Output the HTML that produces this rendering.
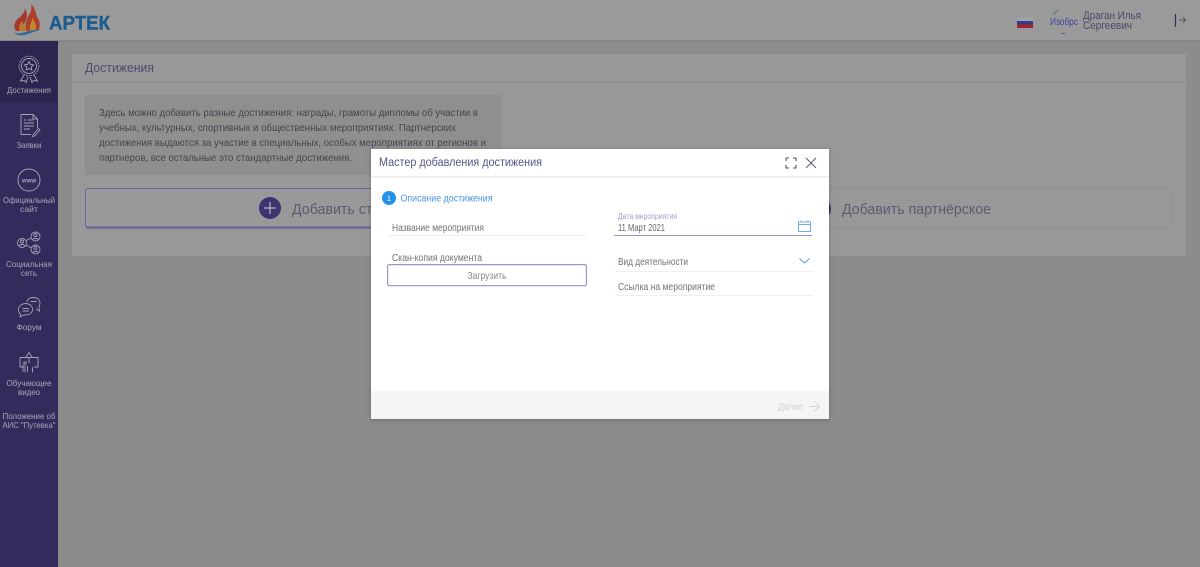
<!DOCTYPE html>
<html lang="ru">
<head>
<meta charset="utf-8">
<title>Достижения</title>
<style>
html,body{margin:0;padding:0;width:1200px;height:567px;overflow:hidden;background:#8c8c8c}
svg{display:block;font-family:"Liberation Sans","DejaVu Sans",sans-serif;filter:blur(.3px)}
.s{font-size:8.5px;fill:#a9a7b6;text-anchor:middle}
.ic{fill:none;stroke:#a6a4b4;stroke-width:.9}
.f{font-size:10px;fill:#727272}
.i{font-size:10.5px;fill:#44444c}
</style>
</head>
<body>
<svg width="1200" height="567" viewBox="0 0 1200 567" xmlns="http://www.w3.org/2000/svg">
<defs>
<filter id="sh" x="-5%" y="-5%" width="110%" height="110%"><feDropShadow dx="0" dy="1" stdDeviation="2" flood-color="#000" flood-opacity=".25"/></filter>
</defs>
<rect width="1200" height="567" fill="#8c8c8c"/>

<!-- top bar -->
<rect width="1200" height="41" fill="#9a9a9a"/>
<rect y="40" width="1200" height="2" fill="#868686"/>
<!-- logo -->
<path d="M16 31C12 25 16 20 20 17C23 14 25 12 25 8C27 12 28 17 25 22C23 26 24 29 26 31Z" fill="#a33a2c"/>
<path d="M27 31C24 26 26 20 29 15C31 12 32 8 31 4C35 8 36 13 37 17C40 21 41 26 38 31Z" fill="#ad4029"/>
<path d="M20 31C18 27 20 24 22 21C23 25 26 26 27 31Z" fill="#bd7a2c"/>
<path d="M30 31C29 26 31 23 33 18C34 22 37 25 36 31Z" fill="#c4862f"/>
<path d="M14 32.500C21 35.500 27 29.500 41 29.500C33 31.500 26 36.500 18 35C16 34.600 15 33.600 14 32.500Z" fill="#2f6c9c"/>
<text x="49" y="29.500" font-size="19" font-weight="700" fill="#1d5c8f" stroke="#1d5c8f" stroke-width=".4" textLength="61" lengthAdjust="spacingAndGlyphs">АРТЕК</text>

<!-- top right -->
<rect x="1017" y="17" width="16" height="4" fill="#a2a2a6"/>
<rect x="1017" y="21" width="16" height="4" fill="#2b3e90"/>
<rect x="1017" y="24.500" width="16" height="3.500" fill="#a8242c"/>
<path d="M1052 14L1057 9L1059 11L1054 15Z" fill="#6f8f78"/>
<text x="1050" y="25" font-size="10" fill="#3e45a0" textLength="28" lengthAdjust="spacingAndGlyphs">Изобрс</text>
<rect x="1061" y="33" width="4" height="1" fill="#5a5a90"/>
<text x="1083" y="19" font-size="11" fill="#4a4a6c" textLength="58" lengthAdjust="spacingAndGlyphs">Драган Илья</text>
<text x="1083" y="29" font-size="11" fill="#4a4a6c" textLength="49" lengthAdjust="spacingAndGlyphs">Сергеевич</text>
<path d="M1175.500 14V27" stroke="#34305c" stroke-width="1.200" fill="none"/>
<path d="M1179 20H1185.500M1183 17.500L1185.500 20L1183 22.500" stroke="#55556a" stroke-width="1" fill="none"/>

<!-- sidebar -->
<rect y="41" width="58" height="526" fill="#342a5c"/>
<rect y="41" width="58" height="62" fill="#2e2450"/>
<!-- medal -->
<g class="ic">
<circle cx="29" cy="66" r="9.800" stroke-dasharray="1.600 .8"/><circle cx="29" cy="66" r="7.500"/>
<path d="M29 61.500L30.400 64.500L33.500 64.900L31.200 67L31.800 70L29 68.500L26.200 70L26.800 67L24.500 64.900L27.600 64.500Z"/>
<path d="M24 75L20.500 81L24.500 80.500L26 82.500L28 77M34 75L37.500 81L33.500 80.500L32 82.500L30 77"/>
</g>
<text class="s" x="29" y="93" textLength="44" lengthAdjust="spacingAndGlyphs">Достижения</text>
<!-- doc -->
<g class="ic">
<path d="M21 114.500H33L37.500 119V128M33 114.500V119H37.500M21 114.500V134.500H31"/>
<path d="M24 120H26M27.500 120H33M24 123H34M24 126H34M24 129H30"/>
<path d="M33 135L38.500 128.500L40 130L34.500 136L32.500 136.500Z"/>
</g>
<text class="s" x="29" y="148" textLength="25" lengthAdjust="spacingAndGlyphs">Заявки</text>
<!-- www -->
<circle class="ic" cx="29" cy="180" r="11"/>
<text x="29" y="182.500" font-size="6.500" font-weight="700" fill="#a6a4b4" text-anchor="middle" textLength="14" lengthAdjust="spacingAndGlyphs">www</text>
<text class="s" x="29" y="203" textLength="52" lengthAdjust="spacingAndGlyphs">Официальный</text>
<text class="s" x="29" y="212" textLength="18" lengthAdjust="spacingAndGlyphs">сайт</text>
<!-- social -->
<g class="ic">
<circle cx="22" cy="243" r="4.500"/><circle cx="35.500" cy="236.500" r="4.500"/><circle cx="35.500" cy="249.500" r="4.500"/>
<path d="M26 240.500L31.500 238M26 245L31.500 248"/>
<circle cx="22" cy="241.500" r="1.500"/><circle cx="35.500" cy="235" r="1.500"/><circle cx="35.500" cy="248" r="1.500"/>
<path d="M19.500 246C20 244 24 244 24.500 246M33 239.500C33.500 238 37.500 238 38 239.500M33 252.500C33.500 251 37.500 251 38 252.500"/>
</g>
<text class="s" x="29" y="267" textLength="46" lengthAdjust="spacingAndGlyphs">Социальная</text>
<text class="s" x="29" y="276" textLength="16" lengthAdjust="spacingAndGlyphs">сеть</text>
<!-- forum -->
<g class="ic">
<path d="M27 302C27 299 30 297.500 33.500 297.500C37 297.500 40 299.500 40 303C40 305 39.500 306 39 307L39.500 311L36 309"/>
<path d="M25.500 303.500C29.500 303.500 32.500 306 32.500 309.500C32.500 313 29 315 25.500 315H23.500L20 317L20.500 314C19 313 18.500 311 18.500 309.500C18.500 306 22 303.500 25.500 303.500Z" fill="#342a5c"/>
<path d="M22.500 308.500H29M22.500 311H29M30.500 301.500H36.500"/>
</g>
<text class="s" x="29" y="330" textLength="25" lengthAdjust="spacingAndGlyphs">Форум</text>
<!-- video -->
<g class="ic">
<path d="M20 357.500H38V367H34M20 357.500V367H24M29 357.500V363"/>
<path d="M26 357L29 352.500L32 357"/>
<circle cx="25" cy="363" r="1.200"/>
<path d="M25 365V372.500M23 364.500V372M27.500 366V372M32.500 367V372.500"/>
</g>
<text class="s" x="29" y="386" textLength="45" lengthAdjust="spacingAndGlyphs">Обучающее</text>
<text class="s" x="29" y="395" textLength="22" lengthAdjust="spacingAndGlyphs">видео</text>
<text class="s" x="29" y="419" textLength="53" lengthAdjust="spacingAndGlyphs">Положение об</text>
<text class="s" x="29" y="428" textLength="53" lengthAdjust="spacingAndGlyphs">АИС "Путевка"</text>

<!-- main card -->
<rect x="72" y="54" width="1114" height="202" fill="#989898"/>
<rect x="72" y="81.500" width="1114" height="1.500" fill="#8e8e8e"/>
<text x="85" y="72" font-size="13" fill="#4e4b6e" textLength="69" lengthAdjust="spacingAndGlyphs">Достижения</text>
<rect x="85" y="95" width="417" height="80" fill="#8f8f8f"/>
<text class="i" x="99" y="116" textLength="379" lengthAdjust="spacingAndGlyphs">Здесь можно добавить разные достижения: награды, грамоты дипломы об участии в</text>
<text class="i" x="99" y="131" textLength="357" lengthAdjust="spacingAndGlyphs">учебных, культурных, спортивных и общественных мероприятиях. Партнерских</text>
<text class="i" x="99" y="146" textLength="387" lengthAdjust="spacingAndGlyphs">достижения выдаются за участие в специальных, особых мероприятиях от регионов и</text>
<text class="i" x="99" y="161" textLength="253" lengthAdjust="spacingAndGlyphs">партнеров, все остальные это стандартные достижения.</text>

<rect x="85.500" y="188.500" width="560" height="39" rx="3" fill="#999999" stroke="#6d6498" stroke-width="1"/>
<rect x="86" y="226.500" width="560" height="2" fill="#6a5f9c"/>
<circle cx="270" cy="208" r="11" fill="#3f3370"/>
<path d="M270 202V214M264 208H276" stroke="#b5b3c4" stroke-width="1.200"/>
<text x="292" y="214" font-size="15" fill="#5c5c70" textLength="150" lengthAdjust="spacingAndGlyphs">Добавить стандартное</text>

<rect x="655.500" y="188.500" width="516" height="40" rx="3" fill="none" stroke="#8a8a8a" stroke-width="1" stroke-dasharray="2 2"/>
<circle cx="820" cy="209" r="11" fill="#3f3370"/>
<text x="842" y="214" font-size="14.500" fill="#5c5c70" textLength="149" lengthAdjust="spacingAndGlyphs">Добавить партнёрское</text>

<!-- modal -->
<rect x="371" y="149" width="458" height="270" fill="#fff" filter="url(#sh)"/>
<rect x="371" y="176" width="458" height="2" fill="#efefef"/>
<text x="379" y="166" font-size="11.500" fill="#55548a" textLength="163" lengthAdjust="spacingAndGlyphs">Мастер добавления достижения</text>
<path d="M786 161V158H789M793 158H796V161M796 165V168H793M789 168H786V165" fill="none" stroke="#55556a" stroke-width="1.100"/>
<path d="M806 158L816 168M816 158L806 168" fill="none" stroke="#55556a" stroke-width=".9"/>

<circle cx="389" cy="198" r="7" fill="#2793e8"/>
<text x="389" y="201" font-size="7.500" fill="#fff" text-anchor="middle">1</text>
<text x="400.500" y="201.500" font-size="10" fill="#4a97e6" textLength="92" lengthAdjust="spacingAndGlyphs">Описание достижения</text>

<text class="f" x="392" y="231" textLength="92" lengthAdjust="spacingAndGlyphs">Название мероприятия</text>
<rect x="387" y="235" width="199" height="1" fill="#efefef"/>
<text class="f" x="392" y="261" textLength="90" lengthAdjust="spacingAndGlyphs">Скан-копия документа</text>
<rect x="387.600" y="264.600" width="198.800" height="21" rx="1.500" fill="#fff" stroke="#a096cc" stroke-width="1.200"/>
<text x="487" y="279" font-size="10" fill="#8a8a8a" text-anchor="middle" textLength="39" lengthAdjust="spacingAndGlyphs">Загрузить</text>

<text x="618" y="219" font-size="8" fill="#a49dc8" textLength="59" lengthAdjust="spacingAndGlyphs">Дата мероприятия</text>
<text x="618" y="231" font-size="10.500" fill="#666" textLength="47" lengthAdjust="spacingAndGlyphs">11 Март 2021</text>
<rect x="614" y="235" width="198" height="1" fill="#9a90c6"/>
<path d="M798.500 222H810.500V231.500H798.500ZM798.500 224.500H810.500M801 220.500V222.500M808 220.500V222.500" fill="none" stroke="#6fafe4" stroke-width="1"/>

<text class="f" x="618" y="265" textLength="70" lengthAdjust="spacingAndGlyphs">Вид деятельности</text>
<path d="M799.500 258.500L804.500 263L809.500 258.500" fill="none" stroke="#4f9ad6" stroke-width=".9"/>
<rect x="614" y="271" width="198" height="1" fill="#efefef"/>
<text class="f" x="618" y="290" textLength="97" lengthAdjust="spacingAndGlyphs">Ссылка на мероприятие</text>
<rect x="614" y="295" width="198" height="1" fill="#efefef"/>

<rect x="371" y="391" width="458" height="28" fill="#f5f5f5"/>
<text x="778" y="410" font-size="10" fill="#d2d2d6" textLength="25" lengthAdjust="spacingAndGlyphs">Далее</text>
<path d="M809 406.500H819.500M814.500 401.500L819.500 406.500L814.500 411.500" fill="none" stroke="#d6d6da" stroke-width="1"/>
</svg>
</body>
</html>
